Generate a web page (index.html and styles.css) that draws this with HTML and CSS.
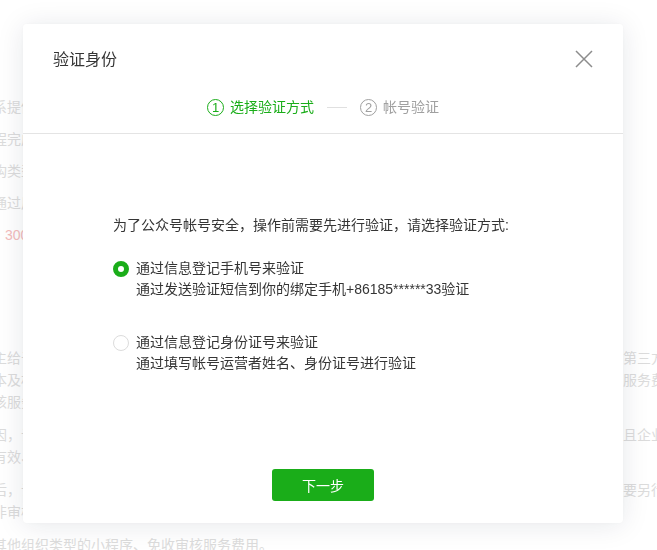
FILE: index.html
```html
<!DOCTYPE html>
<html lang="zh-CN">
<head>
<meta charset="utf-8">
<title>验证身份</title>
<link rel="stylesheet" href="styles.css">
</head>
<body>
<div class="page">
  <ul class="notes">
    <li>系提供认证审核服务的第三方审核机构</li>
    <li>程完成认证后即可获得认证标识</li>
    <li>构类型的帐号需按要求提交材料</li>
    <li>通过后可享受更多高级能力</li>
    <li class="price">300元/次</li>
  </ul>
  <div class="para">
    <div class="ln">主给予认证的帐号，微信公众平台将向其收取认证审核服务费用，该费用将全部由腾讯代为收取并支付第三方审核机构。</div>
    <div class="ln">本及相关材料，审核机构将在收到资料后进行审核，审核通过后收取相应的认证年审相关费用，即审核服务费用为300元/次。</div>
    <div class="ln">核服务费用在审核结束后不予退还。</div>
  </div>
  <div class="para">
    <div class="ln">因，认证审核服务费用支付后，若因材料不全等原因导致认证失败，需重新提交认证申请，再次付费，且企业类型帐号需要重新提交。</div>
    <div class="ln">有效、真实的资料。</div>
  </div>
  <div class="para">
    <div class="ln">后，认证有效期为一年，有效期满前需要进行年审，年审时同样需要支付审核服务费用，如信息变更则要另行提交认证申请。</div>
    <div class="ln">非审核通过，否则不予退款。</div>
  </div>
  <div class="para">
    <div class="ln">其他组织类型的小程序、免收审核服务费用。</div>
  </div>
</div>

<div class="dialog">
  <div class="dialog-hd">
    <div class="title-row">
      <h3 class="title">验证身份</h3>
      <button class="close" type="button" aria-label="关闭">
        <svg width="18" height="18" viewBox="0 0 18 18"><path d="M1 1L17 17M17 1L1 17" stroke="#8c8c8c" stroke-width="1.5" fill="none"/></svg>
      </button>
    </div>
    <div class="steps">
      <div class="step active"><span class="num">1</span><span>选择验证方式</span></div>
      <span class="step-line"></span>
      <div class="step"><span class="num">2</span><span>帐号验证</span></div>
    </div>
  </div>
  <div class="dialog-bd">
    <p class="intro">为了公众号帐号安全，操作前需要先进行验证，请选择验证方式:</p>
    <div class="opt checked">
      <span class="radio"></span>
      <div class="opt-text">
        <div class="opt-title">通过信息登记手机号来验证</div>
        <div class="opt-desc">通过发送验证短信到你的绑定手机+86185******33验证</div>
      </div>
    </div>
    <div class="opt">
      <span class="radio"></span>
      <div class="opt-text">
        <div class="opt-title">通过信息登记身份证号来验证</div>
        <div class="opt-desc">通过填写帐号运营者姓名、身份证号进行验证</div>
      </div>
    </div>
  </div>
  <div class="dialog-ft">
    <button class="btn" type="button">下一步</button>
  </div>
</div>
</body>
</html>
```

FILE: styles.css
```css
html, body {
  margin: 0;
  padding: 0;
  background: #fff;
  overflow: hidden;
}
body {
  font-family: "Liberation Sans", "Noto Sans CJK SC", sans-serif;
  font-size: 14px;
  color: #353535;
  width: 657px;
  height: 550px;
}

/* background page */
.page {
  margin-left: -7px;
  padding-top: 91px;
  color: #dcdcdc;
  white-space: nowrap;
}
.notes {
  list-style: none;
  margin: 0;
  padding: 0;
}
.notes li {
  line-height: 32px;
  height: 32px;
}
.notes .price {
  color: #f3bcbc;
  padding-left: 12px;
}
.para {
  line-height: 22px;
  margin-top: 11px;
}
.notes + .para {
  margin-top: 96px;
}

/* dialog */
.dialog {
  position: fixed;
  left: 23px;
  top: 24px;
  width: 600px;
  background: #fff;
  border-radius: 4px;
  box-shadow: 0 2px 28px rgba(20, 30, 60, 0.1), 0 0 4px rgba(0, 0, 0, 0.03);
}
.dialog-hd {
  padding-top: 24px;
  padding-bottom: 14px;
  border-bottom: 1px solid #e4e4e4;
}
.title-row {
  display: flex;
  align-items: center;
  justify-content: space-between;
  padding: 0 30px;
  height: 24px;
}
.title {
  margin: 0;
  font-size: 16px;
  font-weight: normal;
  line-height: 24px;
  color: #353535;
}
.close {
  border: 0;
  background: none;
  padding: 0;
  width: 18px;
  height: 18px;
  display: block;
  margin-top: -2px;
}
.close svg { display: block; }

.steps {
  margin-top: 23px;
  height: 24px;
  display: flex;
  align-items: center;
  justify-content: center;
  gap: 13px;
  color: #a0a0a0;
  line-height: 24px;
}
.step {
  display: flex;
  align-items: center;
  gap: 6px;
}
.step.active {
  color: #1aad19;
}
.num {
  box-sizing: border-box;
  width: 17px;
  height: 17px;
  border: 1px solid currentColor;
  border-radius: 50%;
  display: flex;
  align-items: center;
  justify-content: center;
  font-size: 13px;
  line-height: 1;
}
.step-line {
  width: 20px;
  height: 1px;
  background: #e0e0e0;
}

.dialog-bd {
  padding: 80px 90px 0;
}
.intro {
  margin: 0 0 22px;
  line-height: 22px;
}
.opt {
  display: flex;
  align-items: flex-start;
  gap: 7px;
  line-height: 21px;
}
.opt + .opt {
  margin-top: 32px;
}
.radio {
  box-sizing: border-box;
  flex: none;
  width: 16px;
  height: 16px;
  margin-top: 3px;
  border-radius: 50%;
  border: 1px solid #dcdcdc;
  background: #fff;
}
.opt.checked .radio {
  border: 5px solid #1aad19;
}

.dialog-ft {
  display: flex;
  justify-content: center;
  padding: 95px 0 22px;
}
.btn {
  width: 102px;
  height: 32px;
  border: 0;
  border-radius: 3px;
  background: #1aad19;
  color: #fff;
  font-family: "Liberation Sans", "Noto Sans CJK SC", sans-serif;
  font-size: 14px;
  padding: 0;
}
```
